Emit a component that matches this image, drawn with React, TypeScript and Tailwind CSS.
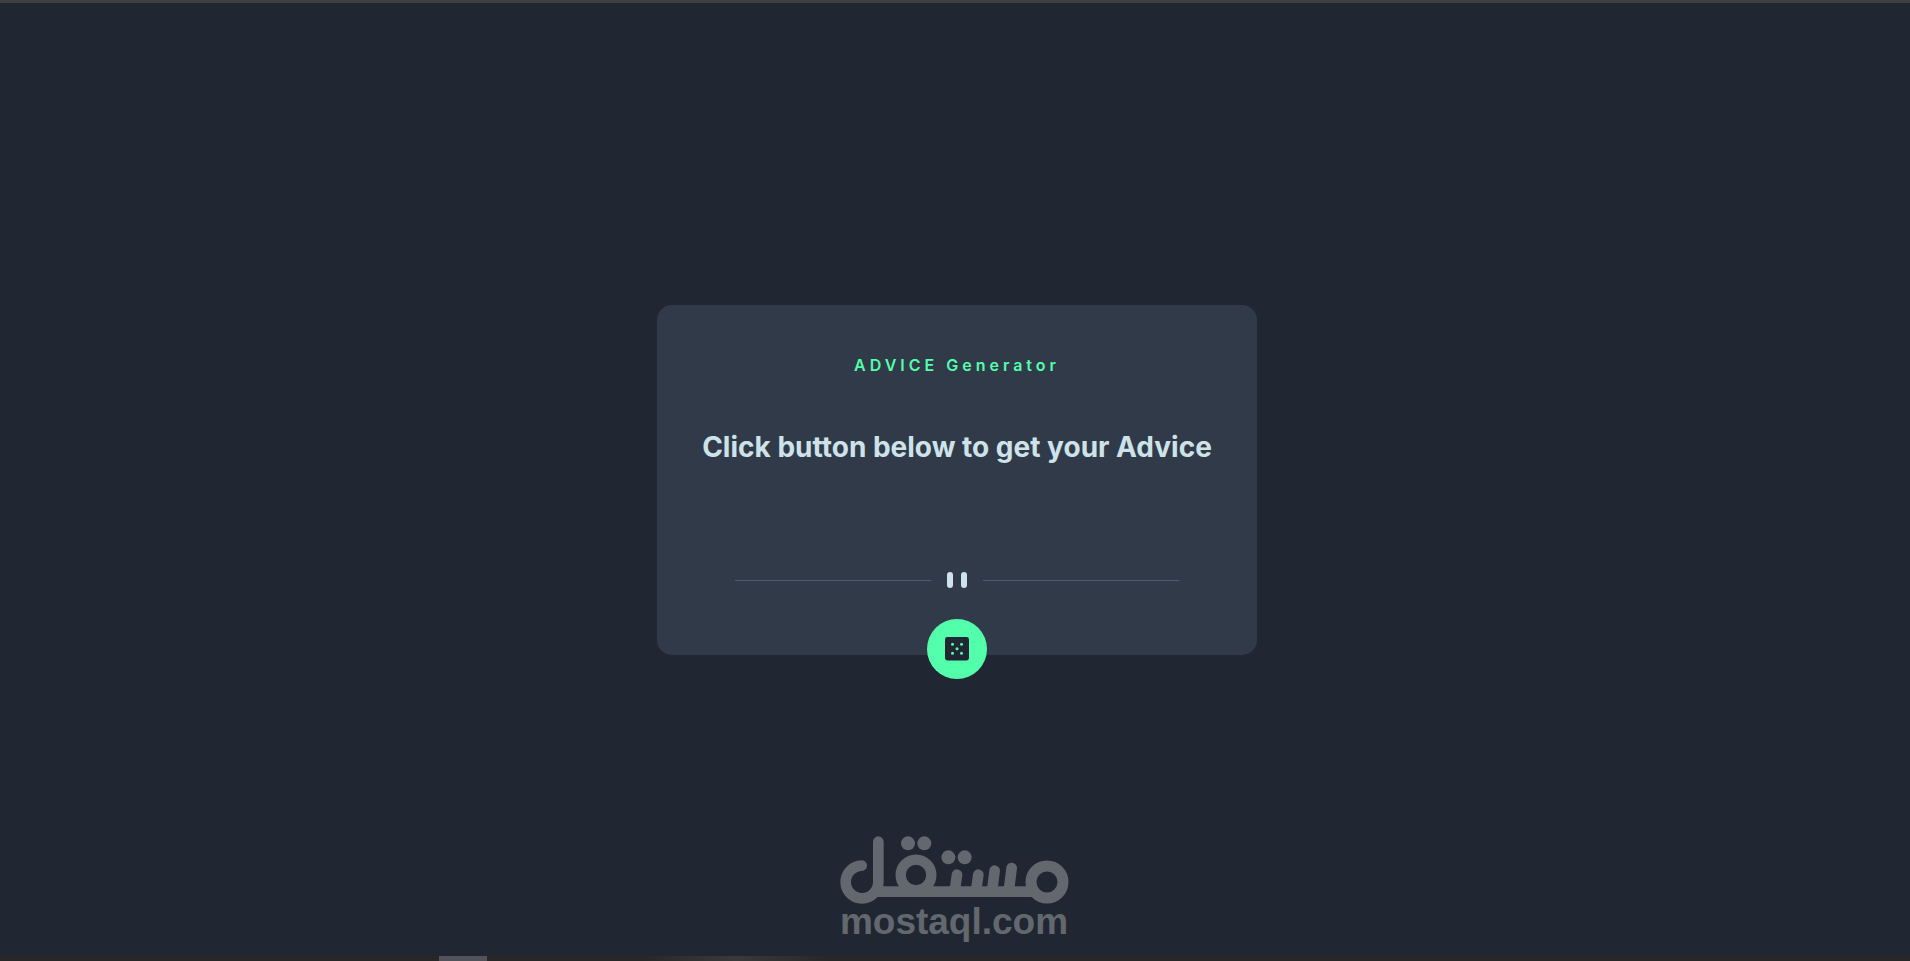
import { useState } from 'react';

const advices = [
    'Click button below to get your Advice',
    'Never stop learning new things',
    'Small steps still move you forward',
    'Rest before you get too tired',
]

function Divider() {
    return (
        <svg className="w-full max-w-[444px]" height="16" viewBox="0 0 444 16" aria-hidden="true">
            <path fill="#4F5D74" d="M0 8h196v1H0zM248 8h196v1H248z" />
            <g fill="#CEE3E9">
                <rect x="212" width="6" height="16" rx="3" />
                <rect x="226" width="6" height="16" rx="3" />
            </g>
        </svg>
    )
}

function Dice() {
    return (
        <svg width="24" height="24" viewBox="0 0 24 24" aria-hidden="true">
            <rect width="24" height="23.5" rx="2.4" fill="#202733" />
            <g fill="#53FFAA">
                <circle cx="7.5" cy="7.2" r="1.5" />
                <circle cx="16.5" cy="7.2" r="1.5" />
                <circle cx="12" cy="11.7" r="1.5" />
                <circle cx="7.5" cy="16.2" r="1.5" />
                <circle cx="16.5" cy="16.2" r="1.5" />
            </g>
        </svg>
    )
}

function Watermark() {
    return (
        <div className="flex flex-col items-center text-[#63686e]">
            <svg width="230" height="68" viewBox="58 47 690 204" role="img" aria-label="مستقل">
                <g fill="none" stroke="currentColor" strokeWidth="32" strokeLinecap="round">
                    <path d="M126 136A49 49 0 1 0 176 185V64" />
                    <path strokeLinecap="butt" d="M160 214H650" />
                    <circle cx="289" cy="164" r="46" strokeWidth="31" />
                    <circle cx="682" cy="185" r="48" strokeWidth="33" />
                    <path d="M412 163L406 206M476 163L470 206M525 151L518 206M576 143L568 206" />
                </g>
                <g fill="currentColor">
                    <circle cx="265" cy="69" r="21" />
                    <circle cx="314" cy="69" r="21" />
                    <circle cx="386" cy="111" r="21" />
                    <circle cx="435" cy="111" r="21" />
                </g>
            </svg>
            <p className="text-[37px] leading-9 font-bold font-['Liberation_Sans',sans-serif]">mostaql.com</p>
        </div>
    )
}

export default function App() {
    const [index, setIndex] = useState(0);

    const nextAdvice = () => setIndex((index + 1) % advices.length)

    return (
        <div className="flex min-h-screen flex-col border-t-3 border-[#404040] bg-[#202733] font-[Inter,sans-serif]">
            <main className="grid flex-1 grid-rows-[1fr_auto_1fr] justify-items-center pt-px pl-1">
                <section className="row-start-2 flex min-h-[350px] w-full max-w-[600px] flex-col items-center rounded-[15px] bg-[#313a49] px-8 pt-12">
                    <h1 className="text-base leading-6 font-semibold tracking-[4px] text-[#53FFAA]">ADVICE Generator</h1>
                    <p className="mt-[50px] text-center text-[28px] leading-10 font-bold text-[#CEE3E9]">{advices[index]}</p>
                    <div className="mt-auto flex w-full justify-center pt-8">
                        <Divider />
                    </div>
                    <button
                        onClick={nextAdvice}
                        aria-label="New advice"
                        className="mt-[31px] -mb-6 flex size-15 cursor-pointer items-center justify-center rounded-full bg-[#53FFAA]"
                    >
                        <Dice />
                    </button>
                </section>
                <div className="row-start-3 self-end pr-1.5 pb-4">
                    <Watermark />
                </div>
            </main>
            <footer className="flex h-[5px] bg-[#272727]">
                <div className="w-[23%]"></div>
                <div className="w-12 bg-[#50545a]"></div>
                <div className="ml-[8%] w-[10%] bg-linear-to-r from-[#272727] via-[#3a3a3a] to-[#272727]"></div>
            </footer>
        </div>
    )
}
